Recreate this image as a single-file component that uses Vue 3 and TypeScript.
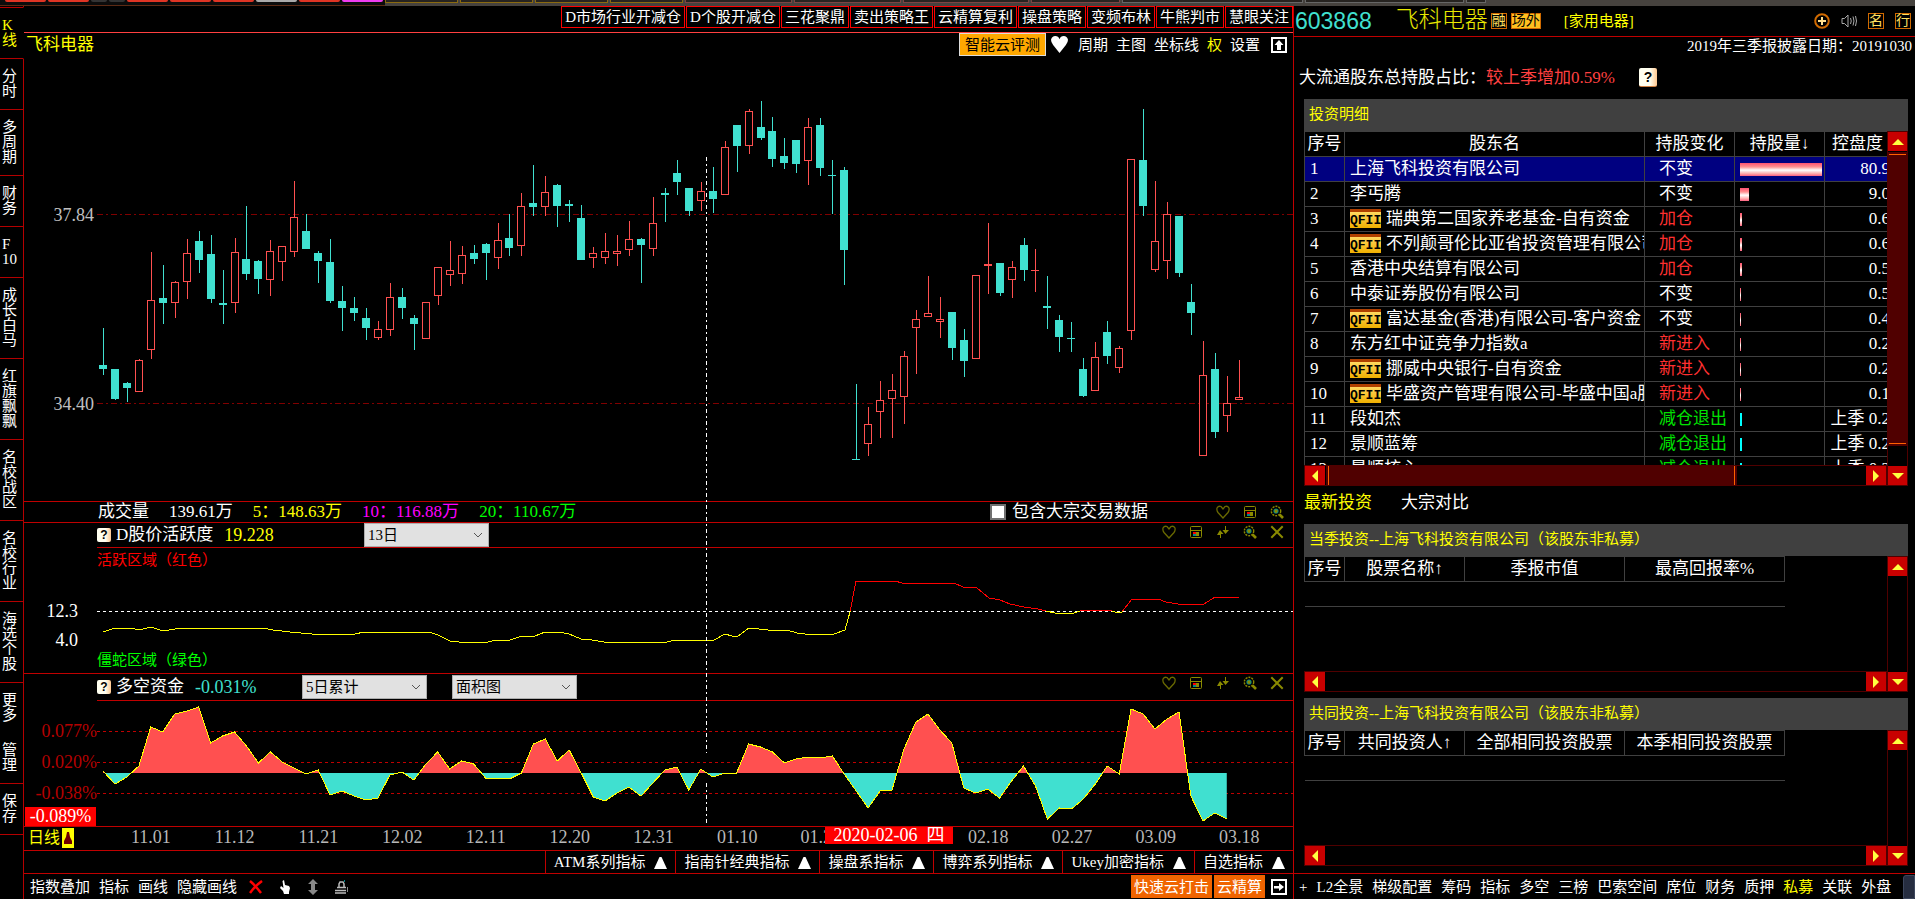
<script setup lang="ts">
import { computed, ref } from 'vue'

type Candle = [up: 0 | 1, high: number, top: number, bottom: number, low: number]

const ribbon = [
  { w: 41, c: 'red' }, { w: 41, c: 'red' }, { w: 16, c: 'dim' }, { w: 16, c: 'dim' }, { w: 41, c: 'red' },
  { w: 41, c: 'red' }, { w: 41, c: 'red' }, { w: 41, c: 'gray' }, { w: 41, c: 'red' }, { w: 41, c: 'pink' },
]
const folders = [
  { w: 73, c: 'gold' }, { w: 73, c: 'gold' }, { w: 73, c: 'gold' }, { w: 73, c: 'gold' },
  { w: 107, c: 'rose' }, { w: 107, c: 'rose' }, { w: 126, c: 'rose' }, { w: 89, c: 'rose' },
  { w: 181, c: 'ash' }, { w: 159, c: 'ash' }, { w: 20, c: 'ash' },
]

const sideItems = [
  { t: 'K线', lines: ['K', '线'], active: true },
  { t: '分时', lines: ['分', '时'] },
  { t: '多周期', lines: ['多', '周', '期'] },
  { t: '财务', lines: ['财', '务'] },
  { t: 'F10', lines: ['F', '10'] },
  { t: '成长白马', lines: ['成', '长', '白', '马'] },
  { t: '红旗飘飘', lines: ['红', '旗', '飘', '飘'] },
  { t: '名校战区', lines: ['名', '校', '战', '区'] },
  { t: '名校行业', lines: ['名', '校', '行', '业'] },
  { t: '海选个股', lines: ['海', '选', '个', '股'] },
  { t: '更多', lines: ['更', '多'], open: true },
  { t: '管理', lines: ['管', '理'] },
  { t: '保存', lines: ['保', '存'] },
]

const strategies = ['D市场行业开减仓', 'D个股开减仓', '三花聚鼎', '卖出策略王', '云精算复利', '操盘策略', '变频布林', '牛熊判市', '慧眼关注']
const tools = [{ t: '周期' }, { t: '主图' }, { t: '坐标线' }, { t: '权', hot: true }, { t: '设置' }]

const candles: Candle[] = [
  [0, 328, 365, 369, 375], [0, 369, 369, 399, 400], [0, 382, 383, 388, 402], [1, 359, 360, 392, 392],
  [1, 252, 300, 350, 359], [0, 265, 298, 303, 324], [1, 281, 282, 303, 318], [1, 239, 253, 282, 299],
  [0, 231, 241, 260, 273], [0, 235, 254, 299, 303], [0, 270, 303, 305, 324], [1, 238, 252, 303, 313],
  [0, 206, 259, 274, 280], [0, 260, 261, 279, 294], [1, 240, 251, 280, 296], [1, 246, 246, 262, 281],
  [1, 181, 217, 252, 257], [0, 214, 231, 249, 249], [0, 251, 253, 261, 283], [0, 239, 262, 301, 303],
  [0, 286, 301, 308, 331], [0, 297, 308, 313, 321], [0, 308, 318, 328, 340], [1, 321, 329, 338, 340],
  [1, 283, 297, 330, 336], [0, 288, 297, 308, 319], [0, 315, 318, 324, 350], [1, 302, 302, 339, 339],
  [1, 267, 267, 296, 305], [1, 241, 270, 275, 286], [1, 246, 255, 274, 284], [0, 245, 253, 259, 264],
  [0, 243, 244, 253, 280], [1, 223, 240, 258, 269], [0, 214, 238, 248, 256], [1, 193, 206, 246, 256],
  [0, 165, 203, 207, 216], [1, 176, 192, 207, 216], [0, 184, 185, 206, 227], [0, 200, 204, 206, 222],
  [0, 205, 218, 260, 260], [1, 247, 253, 258, 268], [1, 233, 251, 258, 264], [1, 235, 251, 254, 266],
  [1, 221, 239, 250, 256], [0, 238, 239, 245, 283], [1, 197, 223, 249, 256], [0, 188, 193, 195, 222],
  [0, 160, 173, 182, 195], [0, 188, 188, 211, 216], [1, 182, 191, 201, 211], [0, 167, 191, 199, 213],
  [1, 141, 147, 195, 195], [0, 125, 125, 146, 172], [1, 109, 111, 146, 154], [0, 101, 127, 138, 140],
  [0, 117, 131, 159, 167], [0, 138, 156, 163, 169], [0, 140, 140, 164, 173], [1, 118, 127, 161, 185],
  [0, 118, 125, 168, 176], [0, 160, 175, 176, 214], [0, 167, 170, 250, 285], [0, 384, 459, 460, 460],
  [1, 407, 424, 444, 456], [1, 381, 400, 412, 438], [1, 374, 390, 399, 438], [1, 351, 356, 397, 424],
  [1, 310, 319, 328, 374], [1, 276, 313, 317, 317], [1, 297, 319, 322, 338], [0, 312, 312, 348, 360],
  [0, 329, 340, 361, 377], [1, 275, 275, 359, 359], [1, 223, 264, 266, 294], [0, 263, 263, 293, 296],
  [1, 261, 267, 280, 298], [0, 238, 245, 270, 281], [1, 249, 270, 271, 292], [0, 276, 306, 308, 329],
  [0, 315, 320, 337, 352], [0, 322, 338, 339, 352], [0, 358, 369, 396, 397], [1, 342, 357, 391, 391],
  [0, 321, 332, 356, 364], [1, 346, 348, 368, 373], [1, 159, 159, 331, 340], [0, 109, 160, 206, 216],
  [1, 181, 241, 270, 272], [1, 202, 214, 261, 279], [0, 216, 216, 273, 277], [0, 284, 302, 313, 335],
  [1, 341, 375, 456, 456], [0, 353, 369, 432, 438], [1, 376, 403, 416, 432], [1, 360, 397, 400, 400],
]
const xOf = (i: number) => 103 + i * 11.955
const bars = computed(() =>
  candles.map(([up, high, top, bottom, low], i) => ({
    up, high, top, bottom, low, x: Math.round(xOf(i)), h: Math.max(bottom - top, 1),
  })),
)

const activity =
  '103,632 115,628 131,628 139,630 151,627 163,631 175,629 182,628 263,628 273,630 290,632 312,634 355,634 364,632 429,632 438,635 450,641 459,642 488,642 496,640 510,640 522,636 535,636 545,632 559,632 569,634 581,639 592,640 604,642 667,642 675,640 714,640 725,634 732,636 737,637 749,628 768,630 787,630 797,633 805,634 834,634 845,630 850,612 856,581 895,581 902,583 954,583 963,587 977,588 989,598 1000,600 1010,604 1024,607 1038,609 1046,611 1055,613 1074,613 1083,610 1109,610 1115,612 1121,613 1132,599 1158,599 1166,602 1178,604 1204,604 1215,597 1239,597'

const flow = [
  771, 784, 777, 766, 727, 732, 714, 711, 707, 743, 736, 732, 746, 763, 752, 762, 768, 774, 770, 795, 791, 796, 800, 798,
  775, 772, 780, 764, 752, 769, 761, 764, 778, 778, 779, 773, 744, 739, 761, 750, 773, 797, 801, 793, 787, 796, 783, 770,
  767, 790, 769, 777, 773, 773, 744, 747, 752, 763, 759, 757, 758, 756, 774, 791, 808, 791, 790, 749, 722, 714, 730, 743,
  788, 793, 789, 798, 781, 766, 786, 819, 808, 809, 799, 784, 766, 774, 709, 714, 729, 719, 712, 796, 821, 813, 819,
]
const flowLine = computed(() => flow.map((y, i) => `${xOf(i).toFixed(1)},${y}`).join(' '))
const flowArea = computed(() => `${xOf(0)},773 ${flowLine.value} ${xOf(flow.length - 1)},773`)

const dates = [
  { t: '11.01', at: 0 }, { t: '11.12', at: 1 }, { t: '11.21', at: 2 }, { t: '12.02', at: 3 }, { t: '12.11', at: 4 },
  { t: '12.20', at: 5 }, { t: '12.31', at: 6 }, { t: '01.10', at: 7 }, { t: '01.21', at: 8 },
  { t: '02.18', at: 10 }, { t: '02.27', at: 11 }, { t: '03.09', at: 12 }, { t: '03.18', at: 13 },
]
const dateLeft = (i: number) => `${((107 + i * 83.7) / 1269) * 100}%`

const groups = ['ATM系列指标', '指南针经典指标', '操盘系指标', '博弈系列指标', 'Ukey加密指标', '自选指标']

const holders = [
  { n: '上海飞科投资有限公司', c: '不变', k: '', w: 82, v: '80.9' },
  { n: '李丐腾', c: '不变', k: '', w: 9, v: '9.0' },
  { q: true, n: '瑞典第二国家养老基金-自有资金', c: '加仓', k: 'up', w: 2, v: '0.6' },
  { q: true, n: '不列颠哥伦比亚省投资管理有限公司', c: '加仓', k: 'up', w: 2, v: '0.6' },
  { n: '香港中央结算有限公司', c: '加仓', k: 'up', w: 2, v: '0.5' },
  { n: '中泰证券股份有限公司', c: '不变', k: '', w: 1, v: '0.5' },
  { q: true, n: '富达基金(香港)有限公司-客户资金', c: '不变', k: '', w: 1, v: '0.4' },
  { n: '东方红中证竞争力指数a', c: '新进入', k: 'up', w: 1, v: '0.2' },
  { q: true, n: '挪威中央银行-自有资金', c: '新进入', k: 'up', w: 1, v: '0.2' },
  { q: true, n: '毕盛资产管理有限公司-毕盛中国a股', c: '新进入', k: 'up', w: 1, v: '0.1' },
  { n: '段如杰', c: '减仓退出', k: 'out', w: 2, v: '上季 0.2' },
  { n: '景顺蓝筹', c: '减仓退出', k: 'out', w: 2, v: '上季 0.2' },
  { n: '景顺核心', c: '减仓退出', k: 'out', w: 2, v: '上季 0.2' },
]
const related = [
  { title: '当季投资--上海飞科投资有限公司（该股东非私募）', heads: ['序号', '股票名称↑', '季报市值', '最高回报率%'] },
  { title: '共同投资--上海飞科投资有限公司（该股东非私募）', heads: ['序号', '共同投资人↑', '全部相同投资股票', '本季相同投资股票'] },
]
const pages = ['L2全景', '梯级配置', '筹码', '指标', '多空', '三榜', '巴索空间', '席位', '财务', '质押', '私募', '关联', '外盘']

const bulk = ref(false)
const days = ref('13日')
const sum = ref('5日累计')
const shape = ref('面积图')
const rowIcons: Record<string, string[]> = {
  volume: ['heart', 'panel', 'zoom'],
  full: ['heart', 'panel', 'swap', 'zoom', 'close'],
}
</script>

<template>
  <div class="app">
    <svg class="defs" aria-hidden="true">
      <symbol id="i-heart" viewBox="0 0 14 14"><path d="M7 13 L2 7.5 Q.5 5.500 1 3 Q2.500.5 5 1.500 L7 4 L9 1.500 Q11.500.5 13 3 Q13.500 5.500 12 7.500Z" fill="none" stroke="#6a6a00" stroke-width="1.3" /></symbol>
      <symbol id="i-panel" viewBox="0 0 14 14"><rect x="1.500" y="1.500" width="11" height="11" rx="1" fill="none" stroke="#8a8a00" /><path d="M1 5.500H13" stroke="#8a8a00" /><path d="M4 7h3v2h-3z" fill="#f00" /><path d="M7 7h3v4h-3z" fill="#8a8a00" /><path d="M4 9h3v2h-3z" fill="#088" /></symbol>
      <symbol id="i-swap" viewBox="0 0 14 14"><path d="M4 5 L7.500 9 H5 V13 H4 V10 H1Z" fill="#8a8a00" /><path d="M9 1 H10 V5 H13 L9.500 9 L6.500 5 H9Z" fill="#8a8a00" /></symbol>
      <symbol id="i-zoom" viewBox="0 0 14 14"><circle cx="6" cy="6" r="4.700" fill="none" stroke="#8a8a00" stroke-width="1.400" stroke-dasharray="2 1" /><circle cx="6" cy="6" r="2.600" fill="#088" /><path d="M6 4 L8 6 L6 8.500 L4 6Z" fill="#8a8a00" /><path d="M9.500 9.500 L13 13" stroke="#8a8a00" stroke-width="2.600" /></symbol>
      <symbol id="i-close" viewBox="0 0 14 14"><path d="M2 2 L12 12 M12 2 L2 12" stroke="#8a8a00" stroke-width="2" stroke-linecap="square" /></symbol>
    </svg>

    <div class="strip">
      <div class="ribbon"><i v-for="(r, i) in ribbon" :key="i" :class="r.c" :style="{ width: r.w + 'px' }" /></div>
      <div class="folders"><i v-for="(f, i) in folders" :key="i" :class="f.c" :style="{ width: f.w + 'px' }" /></div>
    </div>

    <nav class="side">
      <button v-for="s in sideItems" :key="s.t" :class="{ active: s.active, open: s.open }" :aria-label="s.t">
        <span v-for="(l, i) in s.lines" :key="i">{{ l }}</span>
      </button>
    </nav>

    <main class="charts">
      <div class="strategies"><button v-for="s in strategies" :key="s">{{ s }}</button></div>
      <div class="toolbar">
        <h1>飞科电器</h1>
        <button class="smart">智能云评测</button>
        <svg class="fav" viewBox="0 0 16 16"><path d="M8 16 L2 8.500 Q0 6 0 3.500 Q1 0 4 0 Q7 0 8 3 Q9 0 12 0 Q15 0 16 3.500 Q16 6 14 8.500Z" fill="#fff" /></svg>
        <button v-for="t in tools" :key="t.t" class="plain" :class="{ hot: t.hot }">{{ t.t }}</button>
        <button class="plain arrow" aria-label="上移">
          <svg viewBox="0 0 16 16"><rect x="1" y="1" width="14" height="14" fill="none" stroke="#fff" stroke-width="2" /><path d="M8 3 L12.500 8 H10 V13 H6 V8 H3.500Z" fill="#fff" /></svg>
        </button>
      </div>

      <section class="plot grow">
        <div class="gutter">
          <span class="tick" :style="{ top: ((215 - 56) / 445) * 100 + '%' }">37.84</span>
          <span class="tick" :style="{ top: ((404 - 56) / 445) * 100 + '%' }">34.40</span>
        </div>
        <svg class="canvas" viewBox="97 56 1196 445" preserveAspectRatio="none" shape-rendering="crispEdges">
          <path d="M97 214.500H1293 M97 403.500H1293" stroke="#800000" stroke-dasharray="6 3 2 3" />
          <g v-for="(b, i) in bars" :key="i">
            <template v-if="b.up">
              <rect :x="b.x" :y="b.high" width="1" :height="b.top - b.high" fill="#ff5050" />
              <rect :x="b.x" :y="b.bottom" width="1" :height="b.low - b.bottom" fill="#ff5050" />
              <rect :x="b.x - 3.500" :y="b.top + 0.500" width="7" :height="Math.max(b.h - 1, 0.100)" fill="#000" stroke="#ff5050" />
            </template>
            <template v-else>
              <rect :x="b.x" :y="b.high" width="1" :height="b.low - b.high" fill="#40e0d0" />
              <rect :x="b.x - 4" :y="b.top" width="8" :height="b.h" fill="#40e0d0" />
            </template>
          </g>
        </svg>
      </section>

      <div class="row volume">
        <span class="name">成交量</span><span>139.61万</span><span class="y">5：148.63万</span><span class="m">10：116.88万</span><span class="g">20：110.67万</span>
        <label class="bulk"><input v-model="bulk" type="checkbox" />包含大宗交易数据</label>
        <span class="icons"><button v-for="k in rowIcons.volume" :key="k" :aria-label="k"><svg><use :href="'#i-' + k" /></svg></button></span>
      </div>

      <div class="row act">
        <div class="lead wide"><button class="help" aria-label="帮助">?</button><span class="name">D股价活跃度</span><span class="val y">19.228</span></div>
        <label class="pick"><select v-model="days" aria-label="周期天数"><option>13日</option><option>5日</option></select><svg viewBox="0 0 10 6"><path d="M1 1 L5 5 L9 1" fill="none" stroke="#555" /></svg></label>
        <span class="icons"><button v-for="k in rowIcons.full" :key="k" :aria-label="k"><svg><use :href="'#i-' + k" /></svg></button></span>
      </div>
      <section class="plot">
        <div class="gutter">
          <span class="tick w" :style="{ top: ((611 - 547) / 126) * 100 + '%' }">12.3</span>
          <span class="tick w" :style="{ top: ((640 - 547) / 126) * 100 + '%' }">4.0</span>
        </div>
        <div class="zone">
          <svg class="canvas" viewBox="97 548 1196 125" preserveAspectRatio="none">
            <clipPath id="above"><rect x="97" y="548" width="1196" height="63" /></clipPath>
            <clipPath id="below"><rect x="97" y="611" width="1196" height="62" /></clipPath>
            <path d="M97 611.500H1293" stroke="#fff" stroke-dasharray="3 3" shape-rendering="crispEdges" />
            <polyline :points="activity" fill="none" stroke="#f00" stroke-width="1" shape-rendering="crispEdges" clip-path="url(#above)" />
            <polyline :points="activity" fill="none" stroke="#ff0" stroke-width="1" shape-rendering="crispEdges" clip-path="url(#below)" />
          </svg>
          <span class="note r">活跃区域（红色）</span>
          <span class="note g low">僵蛇区域（绿色）</span>
        </div>
      </section>

      <div class="row flow">
        <div class="lead"><button class="help" aria-label="帮助">?</button><span class="name">多空资金</span><span class="val t">-0.031%</span></div>
        <label class="pick"><select v-model="sum" aria-label="累计周期"><option>5日累计</option><option>10日累计</option></select><svg viewBox="0 0 10 6"><path d="M1 1 L5 5 L9 1" fill="none" stroke="#555" /></svg></label>
        <label class="pick"><select v-model="shape" aria-label="图形"><option>面积图</option><option>柱状图</option></select><svg viewBox="0 0 10 6"><path d="M1 1 L5 5 L9 1" fill="none" stroke="#555" /></svg></label>
        <span class="icons"><button v-for="k in rowIcons.full" :key="k" :aria-label="k"><svg><use :href="'#i-' + k" /></svg></button></span>
      </div>
      <section class="plot">
        <div class="gutter">
          <span class="tick d" :style="{ top: ((731 - 700) / 126) * 100 + '%' }">0.077%</span>
          <span class="tick d" :style="{ top: ((762 - 700) / 126) * 100 + '%' }">0.020%</span>
          <span class="tick d" :style="{ top: ((793 - 700) / 126) * 100 + '%' }">-0.038%</span>
          <span class="cursor-value">-0.089%</span>
        </div>
        <div class="zone">
          <svg class="canvas" viewBox="97 701 1196 125" preserveAspectRatio="none">
            <clipPath id="pos"><rect x="97" y="701" width="1196" height="72" /></clipPath>
            <clipPath id="neg"><rect x="97" y="773" width="1196" height="53" /></clipPath>
            <path d="M97 731.500H1293 M97 762.500H1293 M97 793.500H1293" stroke="#c00000" stroke-dasharray="3 3" shape-rendering="crispEdges" />
            <polygon :points="flowArea" fill="#ff5050" clip-path="url(#pos)" />
            <polygon :points="flowArea" fill="#40e0d0" clip-path="url(#neg)" />
            <polyline :points="flowLine" fill="none" stroke="#ff0" stroke-width="1" shape-rendering="crispEdges" />
          </svg>
        </div>
      </section>

      <div class="axis">
        <button class="period">日线<svg viewBox="0 0 12 20"><rect width="12" height="20" fill="#ff0" /><path d="M6 4 L7 4 L8 9 L10 13 V16 H2 V13 L4 9 L5 4Z" fill="#700000" /></svg></button>
        <span v-for="d in dates" :key="d.t" class="date" :style="{ left: dateLeft(d.at) }">{{ d.t }}</span>
        <span class="cursor-date" :style="{ left: (801 / 1269) * 100 + '%' }">2020-02-06&ensp;四</span>
      </div>

      <svg class="crosshair" viewBox="24 6 1269 893" preserveAspectRatio="none" shape-rendering="crispEdges">
        <path d="M706.500 157V753 M706.500 783V826" stroke="#fff" stroke-dasharray="4 3 2 3" />
      </svg>

      <div class="groups"><button v-for="g in groups" :key="g">{{ g }}<svg viewBox="0 0 13 13"><path d="M5.500 1 H7.500 L13 13 H0Z" fill="#fff" /></svg></button></div>

      <div class="bottom">
        <div class="words"><button>指数叠加</button><button>指标</button><button>画线</button><button>隐藏画线</button></div>
        <div class="marks">
          <button aria-label="删除"><svg width="14" height="14" viewBox="0 0 14 14"><path d="M1 1 Q6 5 12 13 M13 1 Q6 6 1 13" fill="none" stroke="#f00" stroke-width="2.500" /></svg></button>
          <button aria-label="手形"><svg width="12" height="14" viewBox="0 0 12 14"><path d="M3.500 1 L5 0 L6 5 L10 6 L11 8 L10 12 V14 H5 L4 11 L1 8 L2 6 L4.500 8Z" fill="#fff" /></svg></button>
          <button aria-label="上下"><svg width="12" height="16" viewBox="0 0 12 16"><path d="M6 0 L11 5 H8 V11 H11 L6 16 L1 11 H4 V5 H1Z" fill="#888" /></svg></button>
          <button aria-label="锁定"><svg width="13" height="14" viewBox="0 0 13 14"><path d="M4 7 V4 L5 2 H8 L9 4 V7" fill="none" stroke="#bbb" stroke-width="1.500" /><path d="M2 7.500H11 M0 10.500H11 M0 13H11" stroke="#bbb" stroke-width="1.500" /><path d="M12.500 7V12" stroke="#888" /><path d="M9 0h1v2h-1z" fill="#088" /></svg></button>
        </div>
        <span class="cta"><button class="hot">快速云打击</button><button class="hot">云精算</button>
          <button class="arrow" aria-label="展开"><svg width="16" height="16" viewBox="0 0 16 16"><rect x="1" y="1" width="14" height="14" fill="none" stroke="#fff" stroke-width="2" /><path d="M3 7 H8 V4 L13 8 L8 12 V9.500 H3Z" fill="#fff" /></svg></button></span>
      </div>
    </main>

    <aside class="info">
      <header class="quote">
        <strong class="code">603868</strong><span class="title">飞科电器</span>
        <span class="box">融</span><span class="box gold">场外</span><a href="#" class="industry">[家用电器]</a>
        <span class="acts">
          <button aria-label="加自选"><svg viewBox="0 0 16 16"><circle cx="8" cy="8" r="6.800" fill="none" stroke="#d06a00" stroke-width="2" /><path d="M8 4V12 M4 8H12" stroke="#ffe090" stroke-width="2" /></svg></button>
          <button aria-label="播报"><svg viewBox="0 0 16 16"><path d="M1 5.500 H3.500 L7 2 V14 L3.500 10.500 H1Z M9.500 5 Q11 8 9.500 11 M12 3.500 Q14 8 12 12.500 M14.500 3 Q16.500 8 14.500 13" fill="none" stroke="#aaa" /></svg></button>
          <button class="box">名</button><button class="box">行</button>
        </span>
      </header>
      <p class="report">2019年三季报披露日期：20191030</p>
      <p class="ratio">大流通股东总持股占比：<em>较上季增加0.59%</em><button class="help big" aria-label="帮助">?</button></p>

      <section class="block first">
        <h2>投资明细</h2>
        <div class="view">
          <table class="holders">
            <colgroup><col class="c1" /><col class="c2" /><col class="c3" /><col class="c3" /><col class="c3" /></colgroup>
            <thead><tr><th>序号</th><th>股东名</th><th>持股变化</th><th>持股量↓</th><th class="last">控盘度</th></tr></thead>
            <tbody>
              <tr v-for="(h, i) in holders" :key="h.n" :class="{ sel: i === 0 }">
                <td class="idx">{{ i + 1 }}</td>
                <td class="who"><b v-if="h.q" class="qfii">QFII</b>{{ h.n }}</td>
                <td class="chg" :class="h.k">{{ h.c }}</td>
                <td class="vol"><div class="bar" :class="h.k === 'out' ? 'out' : ''" :style="{ width: h.w + 'px' }" /></td>
                <td class="ctl"><div>{{ h.v }}</div></td>
              </tr>
            </tbody>
          </table>
        </div>
        <div class="vbar"><button class="up" aria-label="上滚" /><div class="thumb" /><button class="down" aria-label="下滚" /></div>
        <div class="hbar"><button class="left" aria-label="左滚" /><div class="track"><div class="thumb" /></div><button class="right" aria-label="右滚" /></div>
      </section>

      <div class="tabs"><button class="on">最新投资</button><button>大宗对比</button></div>

      <section v-for="r in related" :key="r.title" class="block sub">
        <h2>{{ r.title }}</h2>
        <div class="view">
          <table class="rel">
            <colgroup><col class="c1" /><col class="r2" /><col class="r3" /><col class="r3" /></colgroup>
            <thead><tr><th v-for="h in r.heads" :key="h">{{ h }}</th></tr></thead>
            <tbody><tr><td colspan="4" /></tr></tbody>
          </table>
        </div>
        <div class="vbar"><button class="up" aria-label="上滚" /><button class="down" aria-label="下滚" /></div>
        <div class="hbar"><button class="left" aria-label="左滚" /><div class="track" /><button class="right" aria-label="右滚" /></div>
      </section>

      <nav class="pages"><button aria-label="添加">+</button><a v-for="p in pages" :key="p" href="#" :class="{ on: p === '私募' }">{{ p }}</a><i class="grip" /></nav>
    </aside>
  </div>
</template>

<style>
html, body { margin: 0; background: #000; }
</style>

<style scoped>
* { box-sizing: border-box; }
.app {
  display: grid; grid-template-columns: 24px minmax(0, 1fr) 622px; grid-template-rows: 6px minmax(0, 1fr);
  height: 100vh; min-height: 760px; background: #000; color: #fff; overflow: hidden;
  font-family: "Liberation Serif", "Noto Sans CJK SC", serif; font-size: 15px; font-weight: 400; line-height: 20px;
}
button, select, input { font: inherit; color: inherit; }
button { background: none; border: 0; padding: 0; margin: 0; white-space: nowrap; }
a { color: inherit; text-decoration: none; }
svg { display: block; }
.defs { position: absolute; width: 0; height: 0; }
.y { color: #ff0; } .m { color: #f0f; } .g { color: #0f0; } .r { color: #f00; } .t { color: #40e0d0; }

.strip { grid-column: 1 / -1; display: flex; background: #46423e; overflow: hidden; }
.ribbon { width: 385px; display: flex; gap: 2px; padding-left: 5px; background: #0c0c0c; border-bottom: 1px solid #5c2a14; }
.ribbon i { height: 2px; border-radius: 0 0 3px 3px; background: #e03424; }
.ribbon .dim { background: #333; } .ribbon .gray { background: #aaa; } .ribbon .pink { background: #f03cf0; }
.folders { display: flex; gap: 2px; }
.folders i { height: 3px; background: #262320; border: 1px solid #8a6a10; border-top: 0; }
.folders .rose { border-color: #7c4444; } .folders .ash { border-color: #666; }

.side { display: flex; flex-direction: column; border-right: 1px solid #b40000; padding-top: 1px; }
.side button { display: flex; flex-direction: column; align-items: flex-start; padding: 10px 0 10px 2px; border-bottom: 1px solid #b40000; line-height: 15px; }
.side button.active { color: #ff0; border-top: 1px solid #b40000; margin-right: -1px; border-right: 1px solid #000; }
.side button.open { border-bottom: 0; }

.charts { position: relative; display: flex; flex-direction: column; border-right: 1px solid #c00000; margin-right: -1px; min-width: 0; }
.strategies { display: flex; justify-content: flex-end; gap: 1px; height: 27px; padding-bottom: 4px; border-bottom: 1px solid #ff4040; flex: none; }
.strategies button { border: 1px solid #f00; padding: 0 3px; line-height: 18px; }
.toolbar { display: flex; align-items: center; gap: 8px; height: 23px; padding: 0 6px 0 2px; flex: none; }
h1 { margin: 0 auto 0 0; font-size: 17px; font-weight: 400; color: #ff0; }
.smart { height: 23px; padding: 0 5px; background: #ffa800; color: #000; border: 1px solid #ddd; margin-right: -3px; }
.fav { width: 17px; height: 17px; margin-right: 2px; }
.hot { color: #ff0; }
.plain.arrow { margin-left: 3px; }
.arrow svg { width: 16px; height: 16px; }

.plot { display: flex; height: 126px; flex: none; position: relative; }
.plot.grow { height: auto; flex: 1; min-height: 0; }
.gutter { position: relative; width: 73px; flex: none; }
.tick { position: absolute; right: 3px; transform: translateY(-50%); font-size: 18px; color: #c0c0c0; }
.tick.w { color: #fff; right: 19px; }
.tick.d { color: #b40000; right: 0; }
.cursor-value { position: absolute; left: 1px; right: 1px; bottom: 0; height: 19px; line-height: 19px; background: #f00; text-align: center; font-size: 18px; }
.canvas { flex: 1; min-width: 0; width: 100%; height: 100%; }
.zone { position: relative; flex: 1; min-width: 0; border-top: 1px solid #c00000; }
.note { position: absolute; left: 0; top: 2px; }
.note.low { top: auto; bottom: 3px; }

.row { display: flex; align-items: center; border-top: 1px solid #c00000; padding: 0 9px 0 73px; flex: none; }
.name { font-size: 17px; }
.volume { height: 21px; gap: 20px; padding-left: 74px; font-size: 17px; }
.bulk { display: flex; align-items: center; gap: 6px; margin-left: auto; margin-right: 48px; }
.bulk input { appearance: none; width: 16px; height: 16px; margin: 0; background: #fff; border: 2px solid #707070; }
.icons { display: flex; gap: 13px; }
.icons svg { width: 14px; height: 14px; }
.act { height: 25px; } .flow { height: 27px; }
.act .icons, .flow .icons { margin-left: auto; align-self: flex-start; margin-top: 2px; }
.lead { display: flex; align-items: center; width: 205px; gap: 5px; white-space: nowrap; }
.lead.wide { width: 267px; }
.val { font-size: 18px; margin-left: 6px; }
.help { width: 14px; height: 14px; border-radius: 2px; background: linear-gradient(90deg, #fffff0 60%, #ffc890); color: #000; font: bold 12px/14px "Liberation Sans", sans-serif; }
.help.big { width: 18px; height: 19px; font-size: 14px; line-height: 19px; margin-left: 24px; border-bottom: 1px solid #d08040; }
.pick { position: relative; width: 125px; height: 24px; margin-right: 25px; }
.pick select { appearance: none; display: block; width: 100%; height: 100%; padding: 0 3px; background: #e1e1e1; border: 1px solid #adadad; border-radius: 0; color: #000; }
.pick svg { position: absolute; right: 6px; top: 9px; width: 10px; height: 6px; pointer-events: none; }

.axis { position: relative; height: 24px; border-top: 1px solid #c00000; flex: none; }
.period { display: flex; align-items: center; gap: 2px; height: 22px; margin-left: 4px; color: #ff0; font-size: 16px; }
.period svg { width: 12px; height: 20px; }
.date { position: absolute; top: 0; font-size: 18px; color: #b8b8b8; }
.cursor-date { position: absolute; top: 0; width: 128px; height: 17px; line-height: 17px; background: #f00; text-align: center; font-size: 18px; z-index: 1; white-space: nowrap; }
.crosshair { position: absolute; left: 0; top: 0; width: 100%; height: 100%; pointer-events: none; }

.groups { display: flex; justify-content: flex-end; height: 23px; border-top: 1px solid #c00000; flex: none; }
.groups button { display: flex; align-items: center; gap: 9px; padding: 0 8px; border-left: 1px solid #c00000; }
.groups svg { width: 13px; height: 13px; }
.bottom { display: flex; align-items: center; height: 26px; border-top: 1px solid #c00000; padding: 0 6px; flex: none; }
.words { display: flex; gap: 9px; }
.marks { display: flex; align-items: center; gap: 16px; margin-left: 12px; }
.cta { display: flex; align-items: center; gap: 2px; margin-left: auto; }
.cta .hot { height: 23px; padding: 0 3px; background: #f06400; color: #fff; }
.cta .arrow { margin-left: 4px; }

.info { display: flex; flex-direction: column; min-width: 0; padding-left: 1px; }
.quote { display: flex; align-items: center; height: 31px; border-bottom: 1px solid #c00000; padding: 0 4px 0 1px; flex: none; white-space: nowrap; }
.code { font: 400 23px/30px "Liberation Sans", sans-serif; color: #40e0d0; }
.title { font-size: 23px; font-weight: 300; line-height: 28px; color: #e8e800; margin: 0 3px 2px 24px; }
.box { height: 16px; min-width: 16px; border: 1px solid #d06a00; color: #ffe060; font-size: 14px; line-height: 14px; text-align: center; }
.box.gold { margin-left: 4px; background: #ffc020; color: #000; }
.industry { margin-left: 23px; color: #ff0; }
.acts { display: flex; gap: 11px; margin-left: auto; }
.acts svg { width: 16px; height: 16px; }
.report { margin: 0; height: 19px; line-height: 19px; text-align: right; padding-right: 3px; font-size: 15px; flex: none; }
.ratio { margin: 0; height: 43px; display: flex; align-items: center; padding-left: 5px; font-size: 17px; flex: none; }
.ratio em { font-style: normal; color: #ff4040; }

.block { display: grid; grid-template-columns: minmax(0, 1fr) 21px; grid-template-rows: 32px minmax(0, 1fr) 21px; margin: 0 7px 0 10px; }
.block.first { flex: 1; min-height: 0; }
.block.sub { height: 168px; flex: none; margin-bottom: 6px; }
.block.sub:last-of-type { margin-bottom: 7px; }
h2 { grid-column: 1 / -1; margin: 0; padding-left: 5px; background: #404040; color: #ff0; font-size: 15px; font-weight: 400; line-height: 31px; }
.view { overflow: hidden; }
table { border-collapse: collapse; table-layout: fixed; font-size: 17px; }
.holders { width: 610px; } .rel { width: 480px; }
.c1 { width: 40px; } .c2 { width: 300px; } .c3 { width: 90px; } .r2 { width: 120px; } .r3 { width: 160px; }
th, td { height: 25px; padding: 0; border: 1px solid #404040; font-weight: 400; line-height: 22px; white-space: nowrap; overflow: hidden; }
th.last { text-align: left; padding-left: 7px; }
.rel td { border-left: 0; border-right: 0; }
.sel { background: #000080; }
.idx { padding-left: 5px; }
.who { padding-left: 5px; }
.qfii { display: inline-block; width: 31px; height: 19px; margin: 1px 5px 0 0; border-top: 3px solid #b04000; background: linear-gradient(#ffd860, #f0b000); color: #000; font: bold 13px/17px "Liberation Mono", monospace; vertical-align: top; text-align: center; }
.chg { padding-left: 14px; }
.chg.up { color: #ff3030; } .chg.out { color: #00e000; }
.vol { padding-left: 5px; }
.bar { height: 13px; background: linear-gradient(#ff5070, #ff9090 30%, #fff 55%, #ffb0b0 80%, #ff6080); }
.bar.out { background: #0ff; }
.ctl div { display: flex; justify-content: flex-end; margin: 0 24px 0 5px; overflow: hidden; }

.vbar { grid-column: 2; grid-row: 2 / 4; display: flex; flex-direction: column; border: 1px solid #500000; }
.vbar .thumb { flex: 0 1 294px; margin: 1px 0 0; background: #500000; border: solid #500000; border-width: 2px 1px; box-shadow: inset 0 1px #ff6000, inset 0 -1px #ff6000; }
.vbar .down { margin-top: auto; }
.hbar { grid-column: 1; grid-row: 3; display: flex; border: 1px solid #500000; }
.track { flex: 1; display: flex; }
.hbar .thumb { width: 76%; margin-left: 1px; background: #500000; border: solid #500000; border-width: 0 2px; box-shadow: inset 1px 0 #ff6000, inset -1px 0 #ff6000; }
.vbar button, .hbar button { display: flex; align-items: center; justify-content: center; width: 20px; height: 19px; background: #c80000; flex: none; }
.vbar button { width: 19px; }
.vbar button::after, .hbar button::after { content: ""; border: 6px solid transparent; }
.vbar .up::after { border-top: 0; border-bottom-color: #ffff40; }
.vbar .down::after { border-bottom: 0; border-top-color: #ffff40; }
.hbar .left::after { border-left: 0; border-right-color: #ffff40; }
.hbar .right::after { border-right: 0; border-left-color: #ffff40; }

.tabs { display: flex; align-items: center; gap: 29px; height: 38px; padding: 0 0 4px 10px; font-size: 17px; flex: none; }
.on { color: #ff0; }
.pages { display: flex; align-items: center; gap: 9px; height: 26px; border-top: 1px solid #c00000; padding-left: 5px; flex: none; white-space: nowrap; }
.grip { width: 12px; height: 24px; margin-left: auto; background: #262d40; border: 1px solid #3c465c; border-radius: 3px 0 0 0; }
</style>
